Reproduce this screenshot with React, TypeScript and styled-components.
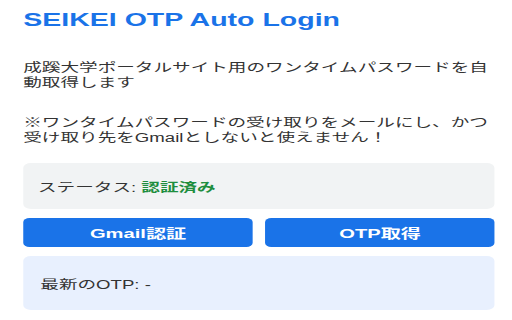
import React from "react";
import styled, { createGlobalStyle } from "styled-components";

const GlobalStyle = createGlobalStyle`
  html, body {
    margin: 0;
    padding: 0;
    background: #ffffff;
    overflow: hidden;
  }
  body {
    font-family: "Liberation Sans", "Noto Sans CJK JP", sans-serif;
    color: #333333;
  }
`;

// the popup is drawn narrow and stretched sideways, as in the capture
const Stage = styled.div`
  width: 330.3px;
  transform: scaleX(1.55);
  transform-origin: 0 0;
`;

const Popup = styled.div`
  display: flex;
  flex-direction: column;
  padding: 9px 11px 0 15px;
`;

const Title = styled.h1`
  margin: 0;
  font-size: 18.4px;
  line-height: 22px;
  font-weight: bold;
  color: #1a73e8;
`;

const Text = styled.p<{ $gap: number }>`
  margin: ${(p) => p.$gap}px 0 0;
  font-size: 12px;
  line-height: 15px;
  color: #333333;
`;

const Panel = styled.div<{ $bg: string; $height: number; $pad: number; $gap: number }>`
  display: flex;
  align-items: center;
  margin-top: ${(p) => p.$gap}px;
  height: ${(p) => p.$height}px;
  padding: 0 ${(p) => p.$pad}px;
  background: ${(p) => p.$bg};
  border-radius: 5px;
  font-size: 12px;
  color: #333333;
`;

const Status = styled.span`
  color: #1e8e3e;
  font-weight: bold;
`;

const Buttons = styled.div`
  display: grid;
  grid-template-columns: 1fr 1fr;
  gap: 8px;
  margin-top: 9px;
`;

const Button = styled.button`
  height: 29px;
  border: none;
  border-radius: 4px;
  background: #1a73e8;
  color: #ffffff;
  font-family: "Liberation Sans", "Noto Sans CJK JP", sans-serif;
  font-size: 13px;
  font-weight: bold;
  cursor: pointer;
`;

const App = () => {
  return (
    <>
      <GlobalStyle />
      <Stage>
        <Popup>
          <Title>SEIKEI OTP Auto Login</Title>
          <Text $gap={30}>
            成蹊大学ポータルサイト用のワンタイムパスワードを自動取得します
          </Text>
          <Text $gap={25}>
            ※ワンタイムパスワードの受け取りをメールにし、かつ受け取り先をGmailとしないと使えません！
          </Text>
          <Panel $bg="#f1f3f4" $height={46} $pad={9.5} $gap={17}>
            ステータス:&nbsp;<Status>認証済み</Status>
          </Panel>
          <Buttons>
            <Button>Gmail認証</Button>
            <Button>OTP取得</Button>
          </Buttons>
          <Panel $bg="#e8f0fe" $height={54} $pad={11} $gap={9}>
            最新のOTP: -
          </Panel>
        </Popup>
      </Stage>
    </>
  );
};

export default App;
